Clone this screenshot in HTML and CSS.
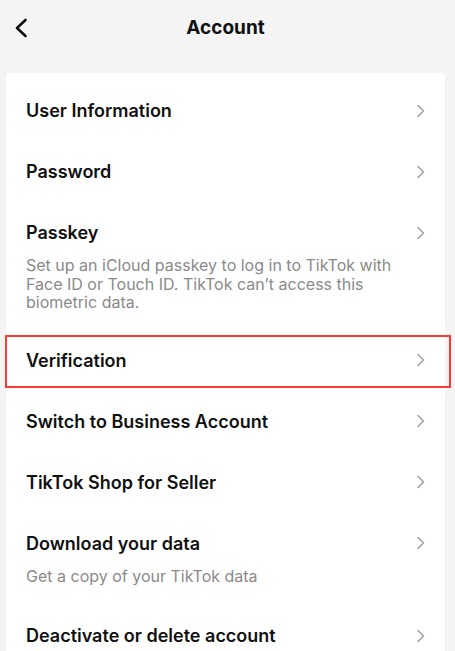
FILE: index.html
```html
<!DOCTYPE html>
<html lang="en">
<head>
<meta charset="utf-8">
<title>Account</title>
<link rel="stylesheet" href="styles.css">
</head>
<body>
<div class="page">
  <header class="header">
    <svg class="back" width="14" height="20" viewBox="0 0 14 20" aria-hidden="true">
      <path d="M11.5 2 L3 10 L11.5 18" fill="none" stroke="#111" stroke-width="2.6" stroke-linecap="round" stroke-linejoin="round"/>
    </svg>
    <h1 class="title">Account</h1>
  </header>
  <main class="card">
    <div class="row">
      <div class="row-head"><span class="label">User Information</span><svg class="chev" width="10" height="14" viewBox="0 0 10 14"><path d="M2 1.5 L7.5 7 L2 12.5" fill="none" stroke="#a3a3a3" stroke-width="1.6" stroke-linecap="round" stroke-linejoin="round"/></svg></div>
    </div>
    <div class="row">
      <div class="row-head"><span class="label">Password</span><svg class="chev" width="10" height="14" viewBox="0 0 10 14"><path d="M2 1.5 L7.5 7 L2 12.5" fill="none" stroke="#a3a3a3" stroke-width="1.6" stroke-linecap="round" stroke-linejoin="round"/></svg></div>
    </div>
    <div class="row">
      <div class="row-head"><span class="label">Passkey</span><svg class="chev" width="10" height="14" viewBox="0 0 10 14"><path d="M2 1.5 L7.5 7 L2 12.5" fill="none" stroke="#a3a3a3" stroke-width="1.6" stroke-linecap="round" stroke-linejoin="round"/></svg></div>
      <p class="desc">Set up an iCloud passkey to log in to TikTok with Face ID or Touch ID. TikTok can’t access this biometric data.</p>
    </div>
    <div class="row row-marked">
      <div class="row-head"><span class="label">Verification</span><svg class="chev" width="10" height="14" viewBox="0 0 10 14"><path d="M2 1.5 L7.5 7 L2 12.5" fill="none" stroke="#a3a3a3" stroke-width="1.6" stroke-linecap="round" stroke-linejoin="round"/></svg></div>
      <div class="highlight"></div>
    </div>
    <div class="row">
      <div class="row-head"><span class="label">Switch to Business Account</span><svg class="chev" width="10" height="14" viewBox="0 0 10 14"><path d="M2 1.5 L7.5 7 L2 12.5" fill="none" stroke="#a3a3a3" stroke-width="1.6" stroke-linecap="round" stroke-linejoin="round"/></svg></div>
    </div>
    <div class="row">
      <div class="row-head"><span class="label">TikTok Shop for Seller</span><svg class="chev" width="10" height="14" viewBox="0 0 10 14"><path d="M2 1.5 L7.5 7 L2 12.5" fill="none" stroke="#a3a3a3" stroke-width="1.6" stroke-linecap="round" stroke-linejoin="round"/></svg></div>
    </div>
    <div class="row row-tall">
      <div class="row-head"><span class="label">Download your data</span><svg class="chev" width="10" height="14" viewBox="0 0 10 14"><path d="M2 1.5 L7.5 7 L2 12.5" fill="none" stroke="#a3a3a3" stroke-width="1.6" stroke-linecap="round" stroke-linejoin="round"/></svg></div>
      <p class="desc">Get a copy of your TikTok data</p>
    </div>
    <div class="row">
      <div class="row-head"><span class="label">Deactivate or delete account</span><svg class="chev" width="10" height="14" viewBox="0 0 10 14"><path d="M2 1.5 L7.5 7 L2 12.5" fill="none" stroke="#a3a3a3" stroke-width="1.6" stroke-linecap="round" stroke-linejoin="round"/></svg></div>
    </div>
  </main>
</div>
</body>
</html>
```
FILE: styles.css
```css
html, body {
  margin: 0;
  padding: 0;
  background: #f4f4f4;
  height: 100%;
  overflow: hidden;
}
body {
  font-family: Inter, "Liberation Sans", Arial, sans-serif;
  color: #111;
}
.page {
  padding: 0 10px 0 6px;
}
.header {
  position: relative;
  height: 55px;
  display: flex;
  align-items: center;
  justify-content: center;
}
.back {
  position: absolute;
  left: 8px;
  top: 18px;
}
.title {
  margin: 0;
  font-size: 19px;
  font-weight: 700;
  line-height: 24px;
  padding-top: 1px;
}
.card {
  margin-top: 18px;
  background: #fff;
  border-radius: 4px;
  padding: 7px 20px 0;
}
.row {
  position: relative;
  padding: 18px 0;
}
.row-tall {
  padding-bottom: 20px;
}
.row-head {
  display: flex;
  align-items: center;
  justify-content: space-between;
  height: 25px;
}
.label {
  font-size: 18px;
  font-weight: 600;
  line-height: 25px;
}
.chev {
  display: block;
  margin-right: -1px;
}
.desc {
  margin: 11px 0 0;
  font-size: 16px;
  line-height: 18.5px;
  color: #8a8a8a;
  padding-right: 30px;
}
.highlight {
  position: absolute;
  left: -21px;
  right: -26px;
  top: 5px;
  height: 49px;
  border: 2px solid #ff3a33;
  pointer-events: none;
}
```
